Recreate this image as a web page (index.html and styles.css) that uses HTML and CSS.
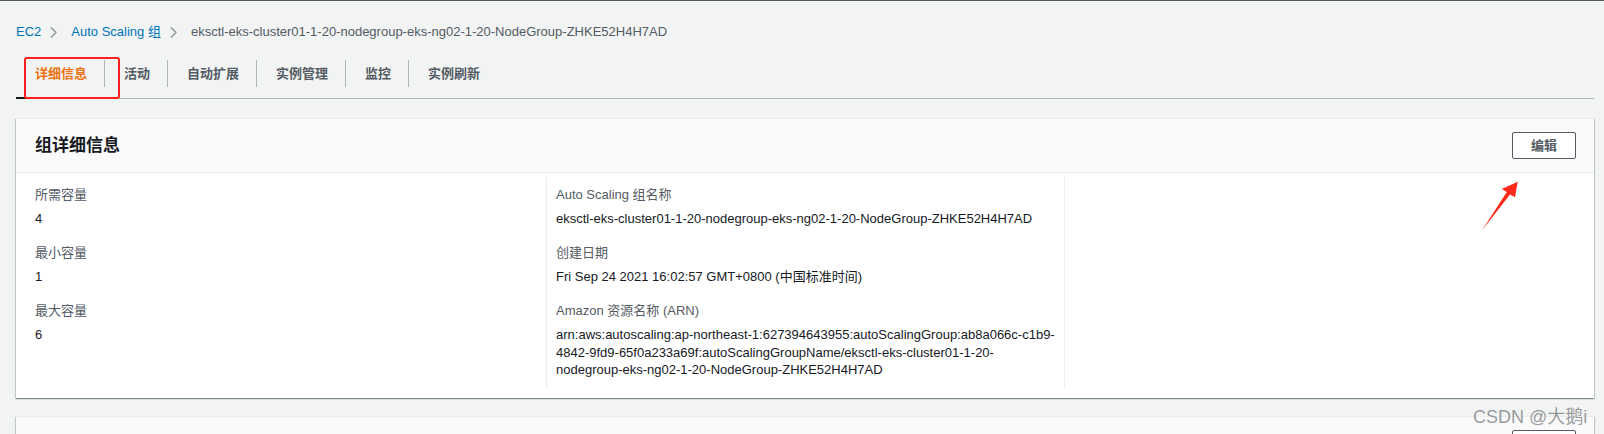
FILE: index.html
```html
<!DOCTYPE html>
<html lang="zh-CN">
<head>
    <meta charset="UTF-8">
    <title>Auto Scaling 组详细信息</title>
    <link rel="stylesheet" href="styles.css">
</head>
<body>
    <div class="page">
        <nav class="crumbs">
            <a href="#">EC2</a>
            <svg class="crumb-sep" width="7" height="11" viewBox="0 0 7 11"><path d="M1 0.5 L6 5.5 L1 10.5" fill="none" stroke="#879196" stroke-width="1.2"/></svg>
            <a href="#">Auto Scaling 组</a>
            <svg class="crumb-sep" width="7" height="11" viewBox="0 0 7 11"><path d="M1 0.5 L6 5.5 L1 10.5" fill="none" stroke="#879196" stroke-width="1.2"/></svg>
            <span class="crumb-current">eksctl-eks-cluster01-1-20-nodegroup-eks-ng02-1-20-NodeGroup-ZHKE52H4H7AD</span>
        </nav>

        <ul class="tabs">
            <li class="tab active">详细信息</li>
            <li class="tab">活动</li>
            <li class="tab">自动扩展</li>
            <li class="tab">实例管理</li>
            <li class="tab">监控</li>
            <li class="tab">实例刷新</li>
        </ul>

        <div class="card">
            <div class="card-head">
                <h2>组详细信息</h2>
                <button class="btn">编辑</button>
            </div>
            <div class="card-body">
                <div class="col">
                    <div class="field">
                        <div class="label">所需容量</div>
                        <div class="value">4</div>
                    </div>
                    <div class="field">
                        <div class="label">最小容量</div>
                        <div class="value">1</div>
                    </div>
                    <div class="field">
                        <div class="label">最大容量</div>
                        <div class="value">6</div>
                    </div>
                </div>
                <div class="col">
                    <div class="field">
                        <div class="label">Auto Scaling 组名称</div>
                        <div class="value">eksctl-eks-cluster01-1-20-nodegroup-eks-ng02-1-20-NodeGroup-ZHKE52H4H7AD</div>
                    </div>
                    <div class="field">
                        <div class="label">创建日期</div>
                        <div class="value">Fri Sep 24 2021 16:02:57 GMT+0800 (中国标准时间)</div>
                    </div>
                    <div class="field">
                        <div class="label">Amazon 资源名称 (ARN)</div>
                        <div class="value arn">arn:aws:autoscaling:ap-northeast-1:627394643955:autoScalingGroup:ab8a066c-c1b9-<br>4842-9fd9-65f0a233a69f:autoScalingGroupName/eksctl-eks-cluster01-1-20-<br>nodegroup-eks-ng02-1-20-NodeGroup-ZHKE52H4H7AD</div>
                    </div>
                </div>
                <div class="col"></div>
            </div>
        </div>

        <!-- next card, only its top edge is in view -->
        <div class="card">
            <div class="card-head card-head-end">
                <span class="btn btn-stub"></span>
            </div>
        </div>
    </div>

    <!-- screenshot annotations -->
    <div class="mark-box"></div>
    <svg class="mark-arrow" width="44" height="56" viewBox="1478 179 44 56">
        <polygon points="1517.7,181.7 1515,197.3 1510,194.4 1481.7,230.7 1506.8,192 1501.7,189" fill="#ff2a1a"/>
    </svg>
    <div class="watermark">CSDN @大鹅i</div>
</body>
</html>
```

FILE: styles.css
```css
html {
    overflow: hidden;
}
body {
    margin: 0;
    position: relative;
    background-color: #f2f3f3;
    border-top: 1px solid #545b64;
    font-family: "Liberation Sans", "Noto Sans CJK SC", sans-serif;
    font-size: 13px;
    color: #16191f;
}
.page {
    padding: 22px 10px 0 16px;
}

/* breadcrumbs */
.crumbs {
    display: flex;
    align-items: center;
    line-height: 18px;
}
.crumbs a {
    color: #0073bb;
    text-decoration: none;
}
.crumb-sep {
    margin: 0 14px 0 9px;
}
.crumb-current {
    color: #545b64;
}

/* tabs */
.tabs {
    display: flex;
    list-style: none;
    margin: 19px 0 0;
    padding: 0 0 11px;
    border-bottom: 1px solid #aab7b8;
}
.tab {
    position: relative;
    padding: 4px 17px 4px 19px;
    line-height: 19px;
    font-weight: bold;
    color: #545b64;
}
.tab + .tab {
    border-left: 1px solid #aab7b8;
}
.tab.active {
    color: #ec7211;
}
.tab.active::after {
    content: "";
    position: absolute;
    left: 0;
    right: 0;
    bottom: -12px;
    height: 2px;
    background-color: #16191f;
}

/* cards */
.card {
    margin-top: 19px;
    background-color: #fff;
    border-top: 1px solid #eaeded;
    box-shadow: 0 1px 1px 0 rgba(0, 28, 36, 0.3), 1px 1px 1px 0 rgba(0, 28, 36, 0.15), -1px 1px 1px 0 rgba(0, 28, 36, 0.15);
}
.card + .card {
    margin-top: 18px;
}
.card-head {
    display: flex;
    justify-content: space-between;
    align-items: center;
    padding: 13px 18px 13px 19px;
    background-color: #fafafa;
    border-bottom: 1px solid #eaeded;
}
.card-head-end {
    justify-content: flex-end;
}
.card-head h2 {
    margin: 0;
    font-size: 17px;
    line-height: 22px;
    font-weight: bold;
}
.btn {
    height: 27px;
    padding: 0 18px;
    border: 1px solid #545b64;
    border-radius: 2px;
    background-color: #fff;
    color: #545b64;
    font-family: inherit;
    font-size: 13px;
    font-weight: bold;
    line-height: 25px;
}
.btn-stub {
    box-sizing: border-box;
    width: 64px;
}
.card-body {
    display: grid;
    grid-template-columns: 511px 518px 1fr;
    padding: 4px 0 9px 19px;
}
.col {
    padding: 9px 0 10px;
}
.col + .col {
    border-left: 1px solid #eaeded;
    padding-left: 9px;
}
.field + .field {
    margin-top: 16px;
}
.label {
    color: #545b64;
    line-height: 18px;
    margin-bottom: 6px;
}
.value {
    line-height: 18px;
}
.value.arn {
    line-height: 17.6px;
    white-space: nowrap;
}

/* red marks drawn on the screenshot */
.mark-box {
    position: absolute;
    left: 24px;
    top: 56px;
    width: 92px;
    height: 38px;
    border: 2px solid #ff1f1f;
    border-radius: 3px;
}
.mark-arrow {
    position: absolute;
    left: 1478px;
    top: 178px;
}
.watermark {
    position: absolute;
    left: 1473px;
    top: 406px;
    font-size: 18px;
    line-height: 20px;
    color: rgba(120, 124, 128, 0.75);
    white-space: nowrap;
}
```
